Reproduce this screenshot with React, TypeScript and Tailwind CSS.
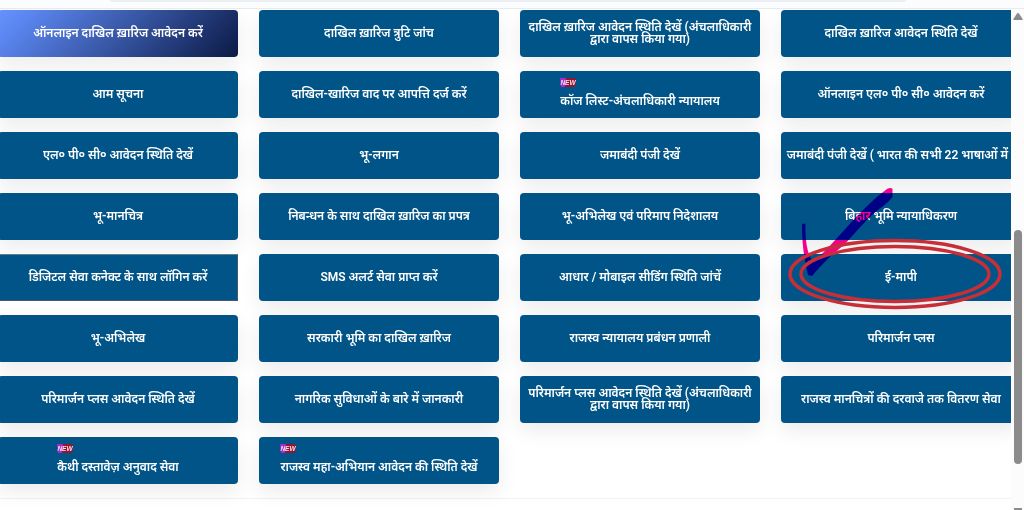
type Service = {
  label: string;
  kind?: "active" | "plain";
  isNew?: boolean;
  marked?: boolean;
  nowrap?: boolean;
};

const services: Service[] = [
  { label: "ऑनलाइन दाखिल ख़ारिज आवेदन करें", kind: "active" },
  { label: "दाखिल ख़ारिज त्रुटि जांच" },
  { label: "दाखिल ख़ारिज आवेदन स्थिति देखें (अंचलाधिकारी द्वारा वापस किया गया)" },
  { label: "दाखिल ख़ारिज आवेदन स्थिति देखें" },
  { label: "आम सूचना" },
  { label: "दाखिल-खारिज वाद पर आपत्ति दर्ज करें" },
  { label: "कॉज लिस्ट-अंचलाधिकारी न्यायालय", isNew: true },
  { label: "ऑनलाइन एल० पी० सी० आवेदन करें" },
  { label: "एल० पी० सी० आवेदन स्थिति देखें" },
  { label: "भू-लगान" },
  { label: "जमाबंदी पंजी देखें" },
  { label: "जमाबंदी पंजी देखें ( भारत की सभी 22 भाषाओं में )", nowrap: true },
  { label: "भू-मानचित्र" },
  { label: "निबन्धन के साथ दाखिल ख़ारिज का प्रपत्र" },
  { label: "भू-अभिलेख एवं परिमाप निदेशालय" },
  { label: "बिहार भूमि न्यायाधिकरण" },
  { label: "डिजिटल सेवा कनेक्ट के साथ लॉगिन करें", kind: "plain" },
  { label: "SMS अलर्ट सेवा प्राप्त करें" },
  { label: "आधार / मोबाइल सीडिंग स्थिति जांचें" },
  { label: "ई-मापी", marked: true },
  { label: "भू-अभिलेख" },
  { label: "सरकारी भूमि का दाखिल ख़ारिज" },
  { label: "राजस्व न्यायालय प्रबंधन प्रणाली" },
  { label: "परिमार्जन प्लस" },
  { label: "परिमार्जन प्लस आवेदन स्थिति देखें" },
  { label: "नागरिक सुविधाओं के बारे में जानकारी" },
  { label: "परिमार्जन प्लस आवेदन स्थिति देखें (अंचलाधिकारी द्वारा वापस किया गया)" },
  { label: "राजस्व मानचित्रों की दरवाजे तक वितरण सेवा" },
  { label: "कैथी दस्तावेज़ अनुवाद सेवा", isNew: true },
  { label: "राजस्व महा-अभियान आवेदन की स्थिति देखें", isNew: true },
];

const base =
  "flex h-[47px] w-full items-center justify-center px-2 text-center text-[12px] leading-[12px] font-semibold text-white";
const looks = {
  normal: "rounded bg-[#005487] shadow-[0_8px_20px_rgba(0,0,0,0.08)]",
  active:
    "rounded bg-linear-[135deg,#6593ff_0%,#5b86f0_12%,#0b1a45_100%] shadow-[0_8px_20px_rgba(0,0,0,0.08)]",
  plain: "border border-t-[#5f7f8f] border-l-[#5f7f8f] border-r-[#46586a] border-b-[#46586a] bg-[#005487]",
};

function NewBadge() {
  return (
    <svg viewBox="0 0 16 9" className="mb-2 block h-[9px] w-4" role="img" aria-label="NEW">
      <path d="M0 0H8V9H1Z" fill="#a52bd0" />
      <path d="M6 0H15L16 2V6L14 9H5Z" fill="#95142f" />
      <text
        x="8"
        y="7"
        textAnchor="middle"
        fontSize="6.5"
        fontWeight="700"
        fontStyle="italic"
        fontFamily="Liberation Sans, sans-serif"
        fill="#f3dff0"
      >
        NEW
      </text>
    </svg>
  );
}

function Marks() {
  return (
    <>
      <svg
        viewBox="0 0 230 130"
        className="pointer-events-none absolute -top-[69px] left-0 z-10 h-[130px] w-[230px] mix-blend-darken"
        aria-hidden="true"
      >
        <path
          d="M21 39 L24.500 38.500 C24 54 26 69 32 77 C54 59 78 24 106 4 Q110 2 111.500 4 L111.500 12 C105 20 99 23 91 30 C78 42 65 60 53 68 C45 75 38 83 31 91 L27 90 C24 76 21 63 21 39Z"
          fill="#ff008c"
        />
      </svg>
      <svg
        viewBox="0 0 230 130"
        className="pointer-events-none absolute -top-[69px] left-0 z-10 h-[130px] w-[230px]"
        fill="none"
        stroke="#c62f38"
        strokeWidth="3.5"
        aria-hidden="true"
      >
        <ellipse cx="114" cy="89" rx="105" ry="33.500" />
        <ellipse cx="114" cy="89" rx="94" ry="27.500" />
      </svg>
    </>
  );
}

function ServiceButton({ item }: { item: Service }) {
  return (
    <li className="relative">
      <button
        type="button"
        className={`${base} ${looks[item.kind ?? "normal"]} ${item.isNew ? "pb-1" : "pb-0.5"} ${item.nowrap ? "whitespace-nowrap" : ""}`}
      >
        {item.isNew ? (
          <span className="flex flex-col items-start">
            <NewBadge />
            <span>{item.label}</span>
          </span>
        ) : (
          item.label
        )}
      </button>
      {item.marked && <Marks />}
    </li>
  );
}

export default function App() {
  return (
    <div className="flex h-screen flex-col overflow-hidden bg-white font-[Roboto,'Noto_Sans',sans-serif]">
      <header className="h-[9px] shrink-0 border-b border-[#e8eaee] bg-[#fbfcfd]">
        <div className="mr-[118px] ml-[110px] h-0.5 rounded-b bg-[#eceff4]" />
      </header>
      <div className="flex min-h-0 flex-1">
        <main className="min-w-0 flex-1 overflow-hidden pt-px">
          <ul className="-mr-2.5 -ml-0.5 grid grid-cols-4 gap-x-[21px] gap-y-3.5">
            {services.map((item) => (
              <ServiceButton key={item.label} item={item} />
            ))}
          </ul>
          <hr className="mt-3.5 border-[#f3f3f5]" />
        </main>
        <aside className="flex w-[13px] shrink-0 flex-col items-center bg-[#fcfcfc] pt-1" aria-hidden="true">
          <svg viewBox="0 0 10 7" className="h-[7px] w-2.5">
            <path d="M4 .6Q5-.4 6 .6L9.600 6Q10 7 9 7H1Q0 7 .4 6Z" fill="#8b8b8b" />
          </svg>
          <div className="mt-[210px] h-[234px] w-2 rounded-full bg-[#8b8b8b]" />
          <div className="mt-auto h-0.5 w-2 bg-[#8b8b8b]" />
        </aside>
      </div>
    </div>
  );
}
